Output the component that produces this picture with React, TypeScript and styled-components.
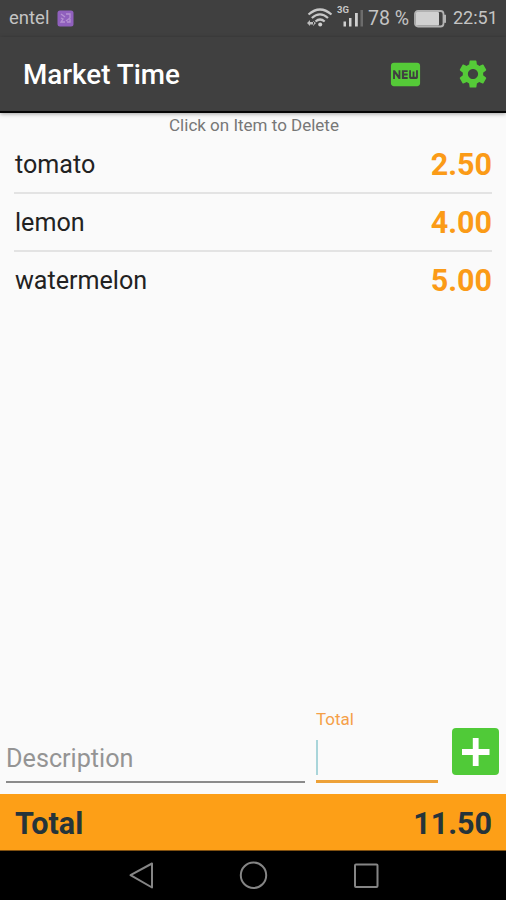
import React from "react";
import styled, { createGlobalStyle } from "styled-components";
import { MdFiberNew, MdSettings } from "react-icons/md";

const GlobalStyle = createGlobalStyle`
  * { box-sizing: border-box; }
  body { margin: 0; font-family: Roboto, sans-serif; background: #fafafa; }
`;

const Screen = styled.div`
  width: 506px;
  height: 900px;
  display: flex;
  flex-direction: column;
  overflow: hidden;
  background: #fafafa;
`;

const StatusBar = styled.div`
  height: 37px;
  flex: none;
  display: flex;
  align-items: center;
  padding: 0 9px;
  background: #404040;
  color: #c4c4c4;
  font-size: 19.5px;
  line-height: 37px;
  white-space: nowrap;
`;

const Carrier = styled.span`
  width: 48px;
  font-size: 18.5px;
`;

const StatusIcons = styled.svg`
  width: 62px;
  height: 37px;
  margin-left: auto;
  flex: none;
`;

const Percent = styled.span`
  width: 46px;
`;

const Clock = styled.span`
  width: 44px;
  height: 37px;
  line-height: 36px;
  font-size: 18px;
`;

const AppBar = styled.header`
  height: 76px;
  flex: none;
  display: flex;
  align-items: center;
  padding: 0 16px 0 23px;
  background: #404040;
  border-bottom: 2px solid #060606;
  box-shadow: 0 1px 4px rgba(0, 0, 0, 0.35);
  color: #fff;
`;

const AppTitle = styled.h1`
  margin: 2px 0 0;
  flex: 1;
  font-size: 27.8px;
  line-height: 32px;
  font-weight: 500;
`;

const BarButton = styled.button<{ $gap?: number }>`
  display: flex;
  padding: 0;
  border: 0;
  background: none;
  color: #55ca38;
  margin-right: ${(p) => p.$gap ?? 0}px;
`;

const Hint = styled.p`
  margin: 0;
  height: 23px;
  padding-left: 2px;
  line-height: 24px;
  font-size: 17px;
  text-align: center;
  color: #777;
`;

const List = styled.ul`
  margin: 0;
  padding: 0 14px;
  list-style: none;
  flex: 1;
`;

const Item = styled.li`
  height: 58px;
  display: flex;
  align-items: center;
  justify-content: space-between;
  padding-left: 1px;
  color: #222;
  font-size: 25.1px;
  border-bottom: 2px solid #e3e3e3;
  &:last-child { border-color: transparent; }
`;

const Price = styled.span`
  padding-top: 1px;
  color: #fb9b17;
  font-size: 30.5px;
  font-weight: 700;
`;

const EntryRow = styled.form`
  flex: none;
  height: 86px;
  display: flex;
  align-items: flex-end;
  padding: 0 7px 11px 6px;
`;

const DescriptionField = styled.div`
  width: 299px;
  height: 46px;
  margin-right: 11px;
  border-bottom: 2px solid #8b8b8b;
  color: #949494;
  font-size: 25.2px;
  line-height: 44px;
`;

const TotalField = styled.div`
  width: 122px;
  height: 75px;
  border-bottom: 3px solid #eda137;
`;

const FieldLabel = styled.div`
  height: 32px;
  line-height: 23px;
  font-size: 17px;
  color: #f5a048;
`;

const Caret = styled.div`
  width: 2px;
  height: 35px;
  background: #a9d5da;
`;

const AddButton = styled.button`
  width: 47px;
  height: 47px;
  margin: 0 0 8px auto;
  padding: 0;
  border: 0;
  border-radius: 4px;
  background: #50ca38;
  display: flex;
`;

const TotalBar = styled.div`
  height: 57px;
  flex: none;
  display: flex;
  align-items: center;
  justify-content: space-between;
  padding: 3px 14px 0 15px;
  border-bottom: 1px solid #805010;
  background: #fd9f17;
  color: #25343a;
  font-size: 30.5px;
  font-weight: 700;
`;

const NavBar = styled.nav`
  height: 49px;
  flex: none;
  background: #000;
  svg { display: block; }
`;

const items = [
  { name: "tomato", price: "2.50" },
  { name: "lemon", price: "4.00" },
  { name: "watermelon", price: "5.00" },
];

function Badge() {
  return (
    <svg width="17" height="17" viewBox="0 0 17 17">
      <rect x=".5" y=".5" width="16" height="16" rx="2.5" fill="#9060bd" />
      <path d="M4 4l4 3M4 8l2 1-2 3h4M9 4h4v4L9 11M10 12h3V9" fill="none" stroke="#b591d2" strokeWidth="1.3" />
    </svg>
  );
}

function Signals() {
  return (
    <StatusIcons viewBox="0 0 62 37">
      <g fill="none" stroke="#c7c7c7" strokeWidth="2.2">
        <path d="M2.5 14.5Q14 4.5 25.5 14.5M5.8 18Q14 10.8 22 18M9.5 21.5Q14 17.5 18.7 21.5" />
      </g>
      <circle cx="14.2" cy="24.6" r="2" fill="#d0d0d0" />
      <path d="M1 23l3-3v2h4v2.5H4V26zM10 23l-3-2v5z" fill="#bbb" />
      <text x="31" y="13" fontSize="9.5" fontWeight="700" fill="#c7c7c7" textLength="12">3G</text>
      <path d="M37.5 21.5H40v5h-2.500zM43 18h2.500v8.500H43zM49 13h2.800v13.500H49z" fill="#d0d0d0" />
      <path d="M54.5 10H57v16.5h-2.5z" fill="#6c6c6c" />
    </StatusIcons>
  );
}

function Battery() {
  return (
    <svg width="39" height="20" viewBox="0 0 39 20">
      <rect x="1" y="2" width="28.5" height="15.5" rx="3" fill="none" stroke="#b2b2b2" strokeWidth="1.8" />
      <rect x="2" y="3" width="23" height="13.5" rx="1" fill="#d0d0d0" />
      <path d="M30.500 6h1v7.500h-1z" fill="#b2b2b2" stroke="#b2b2b2" />
    </svg>
  );
}

function Plus() {
  return (
    <svg width="47" height="47" viewBox="0 0 47 47">
      <path d="M23.700 10v28M10 24h27.500" stroke="#fff" strokeWidth="5.800" />
    </svg>
  );
}

export default function App() {
  return (
    <Screen>
      <GlobalStyle />
      <StatusBar>
        <Carrier>entel</Carrier>
        <Badge />
        <Signals />
        <Percent>78 %</Percent>
        <Battery />
        <Clock>22:51</Clock>
      </StatusBar>
      <AppBar>
        <AppTitle>Market Time</AppTitle>
        <BarButton $gap={33} aria-label="New list"><MdFiberNew size={35} /></BarButton>
        <BarButton aria-label="Settings"><MdSettings size={34} /></BarButton>
      </AppBar>
      <Hint>Click on Item to Delete</Hint>
      <List>
        {items.map((item) => (
          <Item key={item.name}>
            <span>{item.name}</span>
            <Price>{item.price}</Price>
          </Item>
        ))}
      </List>
      <EntryRow>
        <DescriptionField>Description</DescriptionField>
        <TotalField>
          <FieldLabel>Total</FieldLabel>
          <Caret />
        </TotalField>
        <AddButton type="button" aria-label="Add item"><Plus /></AddButton>
      </EntryRow>
      <TotalBar>
        <span>Total</span>
        <span>11.50</span>
      </TotalBar>
      <NavBar>
        <svg width="506" height="49" viewBox="0 0 506 49" fill="none" stroke="#858585" strokeWidth="2" strokeLinejoin="round">
          <path d="M130.5 24.2L152 12.5v24z" />
          <circle cx="253.5" cy="24.2" r="12.7" />
          <rect x="355" y="13.5" width="22.5" height="22.5" rx="1" />
        </svg>
      </NavBar>
    </Screen>
  );
}
